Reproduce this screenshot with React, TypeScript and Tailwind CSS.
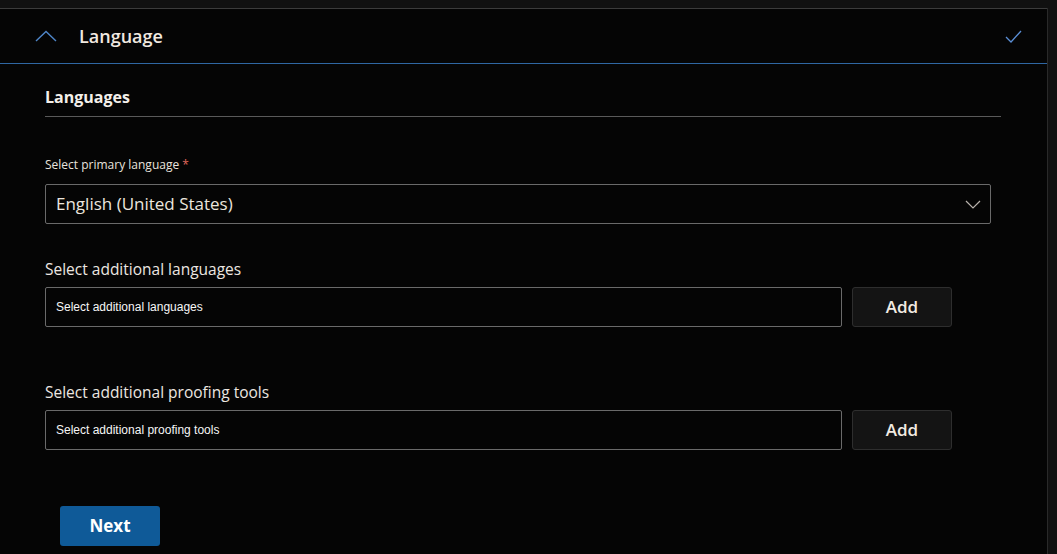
import React from "react";

const font = { fontFamily: '"Open Sans", "Noto Sans", sans-serif' };

function ChevronUp() {
  return (
    <svg width="22" height="12" viewBox="0 0 22 12" fill="none">
      <path d="M1 11 L11 1.5 L21 11" stroke="#4f86c9" strokeWidth="1.4" />
    </svg>
  );
}

function Check() {
  return (
    <svg width="17" height="13" viewBox="0 0 17 13" fill="none">
      <path d="M1 7 L6 12 L16 1" stroke="#5b8fd6" strokeWidth="1.3" />
    </svg>
  );
}

function ChevronDown() {
  return (
    <svg width="16" height="9" viewBox="0 0 16 9" fill="none">
      <path d="M1 1 L8 8 L15 1" stroke="#b9b3ad" strokeWidth="1.2" />
    </svg>
  );
}

function AddRow({ placeholder }: { placeholder: string }) {
  return (
    <div className="flex gap-[10px]">
      <div className="w-[797px] h-[40px] border border-[#6a6a6a] rounded-[2px] flex items-center pl-[10px]">
        <span
          className="text-[12px] text-[#f6f6f6]"
          style={{ fontFamily: '"Liberation Sans", Arial, sans-serif' }}
        >
          {placeholder}
        </span>
      </div>
      <button className="w-[100px] h-[40px] bg-[#141414] border border-[#2e2e2e] rounded-[3px] flex items-center justify-center text-[17px] font-semibold text-[#f2ebe2]">
        Add
      </button>
    </div>
  );
}

export default function App() {
  return (
    <div className="min-h-[554px] bg-[#111111] pt-[8px] pr-[9px]" style={font}>
      <div className="bg-[#050505] min-h-[546px] border-r border-[#2a2a2a]">
        <div className="h-[56px] border-t border-t-[#3c3c3c] border-b border-b-[#2f67a3] flex items-center">
          <div className="w-[79px] flex items-center pl-[35px]">
            <ChevronUp />
          </div>
          <span className="text-[18px] font-semibold text-[#f1e9e0] leading-none -mt-[1px]">
            Language
          </span>
          <div className="ml-auto mr-[25px] flex items-center">
            <Check />
          </div>
        </div>

        <div className="pl-[45px]">
          <div className="w-[956px] h-[53px] border-b border-[#5a5a5a] pt-[21px]">
            <span className="text-[16px] font-bold text-[#f4f0ea] leading-[24px] block">
              Languages
            </span>
          </div>

          <div className="mt-[40px] text-[12px] leading-[16px] text-[#e8e3dd]">
            Select primary language <span className="text-[#e0695c]">*</span>
          </div>
          <div className="mt-[11px] w-[946px] h-[40px] border border-[#6a6a6a] rounded-[2px] flex items-center pl-[10px] pr-[9px]">
            <span className="text-[17px] text-[#ece6df]">English (United States)</span>
            <div className="ml-auto">
              <ChevronDown />
            </div>
          </div>

          <div className="mt-[35px] text-[15.5px] leading-[20px] text-[#ece7e1]">
            Select additional languages
          </div>
          <div className="mt-[8px]">
            <AddRow placeholder="Select additional languages" />
          </div>

          <div className="mt-[55px] text-[15.5px] leading-[20px] text-[#ece7e1]">
            Select additional proofing tools
          </div>
          <div className="mt-[8px]">
            <AddRow placeholder="Select additional proofing tools" />
          </div>

          <button className="mt-[56px] ml-[15px] w-[100px] h-[40px] bg-[#0f5a98] rounded-[3px] text-[17px] font-bold text-white flex items-center justify-center">
            Next
          </button>
        </div>
      </div>
    </div>
  );
}
